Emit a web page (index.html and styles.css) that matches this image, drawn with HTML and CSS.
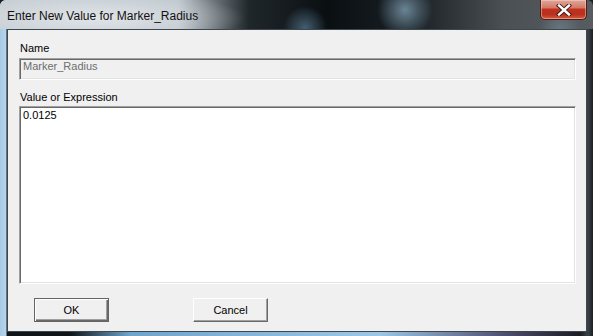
FILE: index.html
```html
<!DOCTYPE html>
<html lang="en">

<head>
    <meta charset="UTF-8">
    <title>Enter New Value for Marker_Radius</title>
    <link rel="stylesheet" href="styles.css">
</head>

<body>
    <div class="window">
        <div class="titlebar">
            <span class="title">Enter New Value for Marker_Radius</span>
            <button class="closeButton" aria-label="Close">
                <svg width="16" height="12" viewBox="0 0 16 12">
                    <path d="M3 1.5 L13 10.5 M13 1.5 L3 10.5" stroke="#3a1a14" stroke-width="4.2" stroke-linecap="square" />
                    <path d="M3 1.5 L13 10.5 M13 1.5 L3 10.5" stroke="#ffffff" stroke-width="2.4" stroke-linecap="square" />
                </svg>
            </button>
        </div>
        <div class="client">
            <label class="fieldLabel">Name</label>
            <div class="field disabled">Marker_Radius</div>
            <label class="fieldLabel valueLabel">Value or Expression</label>
            <div class="field area">0.0125</div>
            <div class="buttonRow">
                <button class="dlgButton default">OK</button>
                <button class="dlgButton">Cancel</button>
            </div>
        </div>
    </div>
</body>

</html>
```

FILE: styles.css
```css
html,
body {
    margin: 0;
    padding: 0;
    background: #1a2026;
}

.window {
    width: 593px;
    height: 336px;
    box-sizing: border-box;
    display: flex;
    flex-direction: column;
    padding: 0 6px 4px 7px;
    border-radius: 6px 6px 0 0;
    overflow: hidden;
    /* left frame light blue, bottom strip mixed, right frame dark */
    background: linear-gradient(to right, #a8cae6 0, #b8d4ec 6px, #0e1418 7px, #0e1418 70px, #6fa4cc 130px, #9cc6e6 380px, #4a4a6a 510px, #1a1c22 580px, #3a4248 588px, #1a1e22 100%);
}

.titlebar {
    height: 29px;
    flex: none;
    margin: 0 -6px 0 -7px;
    position: relative;
    display: flex;
    align-items: flex-start;
    background:
        radial-gradient(ellipse 150px 28px at 95px 18px, rgba(226, 230, 233, 0.95), rgba(226, 230, 233, 0) 100%),
        radial-gradient(circle 28px at 405px 10px, rgba(120, 150, 170, 0.85), rgba(120, 150, 170, 0)),
        radial-gradient(circle 22px at 305px 28px, rgba(90, 125, 150, 0.7), rgba(90, 125, 150, 0)),
        radial-gradient(circle 22px at 560px 30px, rgba(120, 140, 155, 0.6), rgba(120, 140, 155, 0)),
        linear-gradient(to right, #c4ccd2 0, #bcc5cc 30%, #20272b 42%, #0a0f12 55%, #1a2024 70%, #4a5054 85%, #565c60 100%);
}

.title {
    font-family: "Liberation Sans", Arial, sans-serif;
    font-size: 12px;
    color: #111;
    margin: 9px 0 0 7px;
}

.closeButton {
    position: absolute;
    top: 0;
    right: 6px;
    width: 47px;
    height: 20px;
    padding: 0;
    border: 1px solid #4a2018;
    border-top: none;
    border-radius: 0 0 5px 5px;
    background: linear-gradient(to bottom, #e0a89a 0, #d27a68 40%, #c0301c 50%, #b8301e 75%, #d65a3e 100%);
    box-shadow: inset 0 0 0 1px rgba(255, 220, 210, 0.45);
    display: flex;
    align-items: center;
    justify-content: center;
}

.client {
    flex: 1;
    background: #f0f0f0;
    border: 1px solid #3c4850;
    display: flex;
    flex-direction: column;
    padding: 12px 10px 0 11px;
    font-family: "Liberation Sans", Arial, sans-serif;
    font-size: 11px;
    line-height: 13px;
    color: #000;
}

.fieldLabel {
    margin-left: 1px;
}

.valueLabel {
    margin-top: 11px;
}

.field {
    box-sizing: border-box;
    border-style: solid;
    border-width: 1px;
    border-color: #a0a0a0 #ffffff #ffffff #a0a0a0;
    box-shadow: inset 1px 1px 0 #696969, inset -1px -1px 0 #e3e3e3;
    padding: 2px 3px;
}

.disabled {
    margin-top: 3px;
    height: 22px;
    padding-top: 1px;
    background: #f0f0f0;
    color: #6d6d6d;
}

.area {
    margin-top: 2px;
    height: 178px;
    background: #fff;
}

.buttonRow {
    display: flex;
    gap: 84px;
    margin: 14px 0 0 15px;
}

.dlgButton {
    width: 75px;
    height: 24px;
    padding: 0;
    font-family: "Liberation Sans", Arial, sans-serif;
    font-size: 11px;
    color: #000;
    background: #f0f0f0;
    border-style: solid;
    border-width: 1px;
    border-color: #ffffff #696969 #696969 #ffffff;
    box-shadow: inset -1px -1px 0 #a0a0a0;
}

.dlgButton.default {
    border: 1px solid #646464;
    box-shadow: inset 1px 1px 0 #fff, inset -1px -1px 0 #696969, inset -2px -2px 0 #a0a0a0;
}
```
